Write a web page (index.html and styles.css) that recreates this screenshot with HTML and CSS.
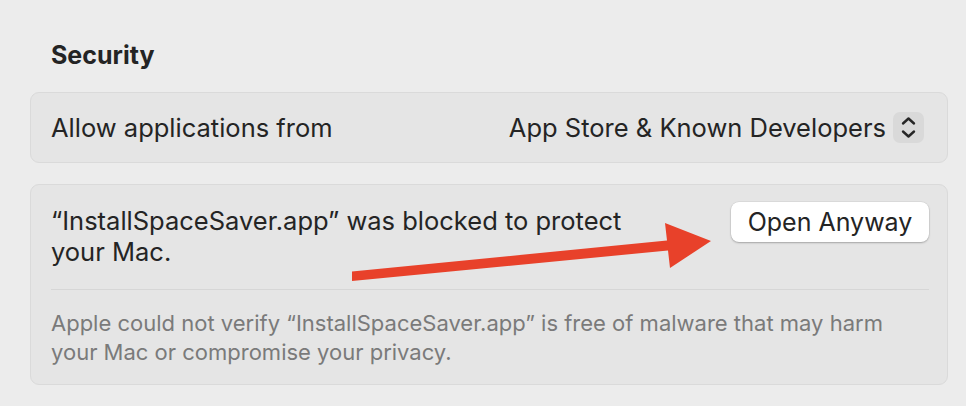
FILE: index.html
```html
<!DOCTYPE html>
<html lang="en">
<head>
  <meta charset="UTF-8">
  <title>Security</title>
  <link rel="stylesheet" href="styles.css">
</head>
<body>

  <h2 class="section-title">Security</h2>

  <div class="card row">
    <span class="label">Allow applications from</span>
    <div class="popup">
      <span>App Store &amp; Known Developers</span>
      <span class="stepper">
        <svg width="31" height="31" viewBox="0 0 31 31">
          <polyline points="10,11.5 15.5,6.5 21,11.5" />
          <polyline points="10,19.5 15.5,24.5 21,19.5" />
        </svg>
      </span>
    </div>
  </div>

  <div class="card blocked">
    <div class="blocked-top">
      <p class="message">“InstallSpaceSaver.app” was blocked to protect<br>your Mac.</p>
      <button class="open-btn">Open Anyway</button>
    </div>
    <div class="divider"></div>
    <p class="note">Apple could not verify “InstallSpaceSaver.app” is free of malware that may harm your Mac or compromise your privacy.</p>
  </div>

  <!-- annotation arrow over the card -->
  <svg class="arrow" width="966" height="406" viewBox="0 0 966 406">
    <polygon points="352,271.5 667,240.5 665,223 711,241 670,268 668,250.5 352,281" />
  </svg>

</body>
</html>
```

FILE: styles.css
```css
:root {
  --bg-color: #ececec;
  --card-bg: #e5e5e5;
  --card-border: #dadada;
  --text-color: #242424;
  --muted-color: #7a7a7a;
  --arrow-color: #e8412a;
}

body {
  margin: 0;
  padding: 0 18px 0 30px;
  height: 406px;
  box-sizing: border-box;
  background: var(--bg-color);
  font-family: 'Inter', 'Liberation Sans', sans-serif;
  color: var(--text-color);
  position: relative;
  overflow: hidden;
}

.section-title {
  margin: 0 0 22px;
  padding: 40px 0 0 21px;
  font-size: 25px;
  font-weight: 700;
  line-height: 30px;
}

.card {
  background: var(--card-bg);
  border: 1px solid var(--card-border);
  border-radius: 9px;
}

.row {
  height: 71px;
  box-sizing: border-box;
  display: flex;
  align-items: center;
  justify-content: space-between;
  padding: 0 23px 0 20px;
  font-size: 25.5px;
}

.popup {
  display: flex;
  align-items: center;
  gap: 7px;
}

.stepper {
  display: flex;
  width: 31px;
  height: 31px;
  border-radius: 7px;
  background: #d9d9d9;
}

.stepper polyline {
  fill: none;
  stroke: #262626;
  stroke-width: 2.4;
  stroke-linecap: round;
  stroke-linejoin: round;
}

.blocked {
  margin-top: 21px;
  padding: 17px 18px 17px 20px;
}

.blocked-top {
  display: flex;
  align-items: flex-start;
  justify-content: space-between;
}

.message {
  margin: 3px 0 0;
  font-size: 25.5px;
  line-height: 31px;
}

.open-btn {
  width: 198px;
  height: 40px;
  padding: 0;
  background: #fff;
  border: none;
  border-radius: 8px;
  box-shadow: 0 1px 2px rgba(0,0,0,0.25), 0 0 0 0.5px rgba(0,0,0,0.08);
  font-family: inherit;
  font-size: 25px;
  color: var(--text-color);
}

.divider {
  height: 1px;
  background: #d6d6d6;
  margin-top: 22px;
}

.note {
  margin: 19px 0 0;
  font-size: 22px;
  line-height: 29px;
  color: var(--muted-color);
}

.arrow {
  position: absolute;
  top: 0;
  left: 0;
  pointer-events: none;
}

.arrow polygon {
  fill: var(--arrow-color);
}
```
